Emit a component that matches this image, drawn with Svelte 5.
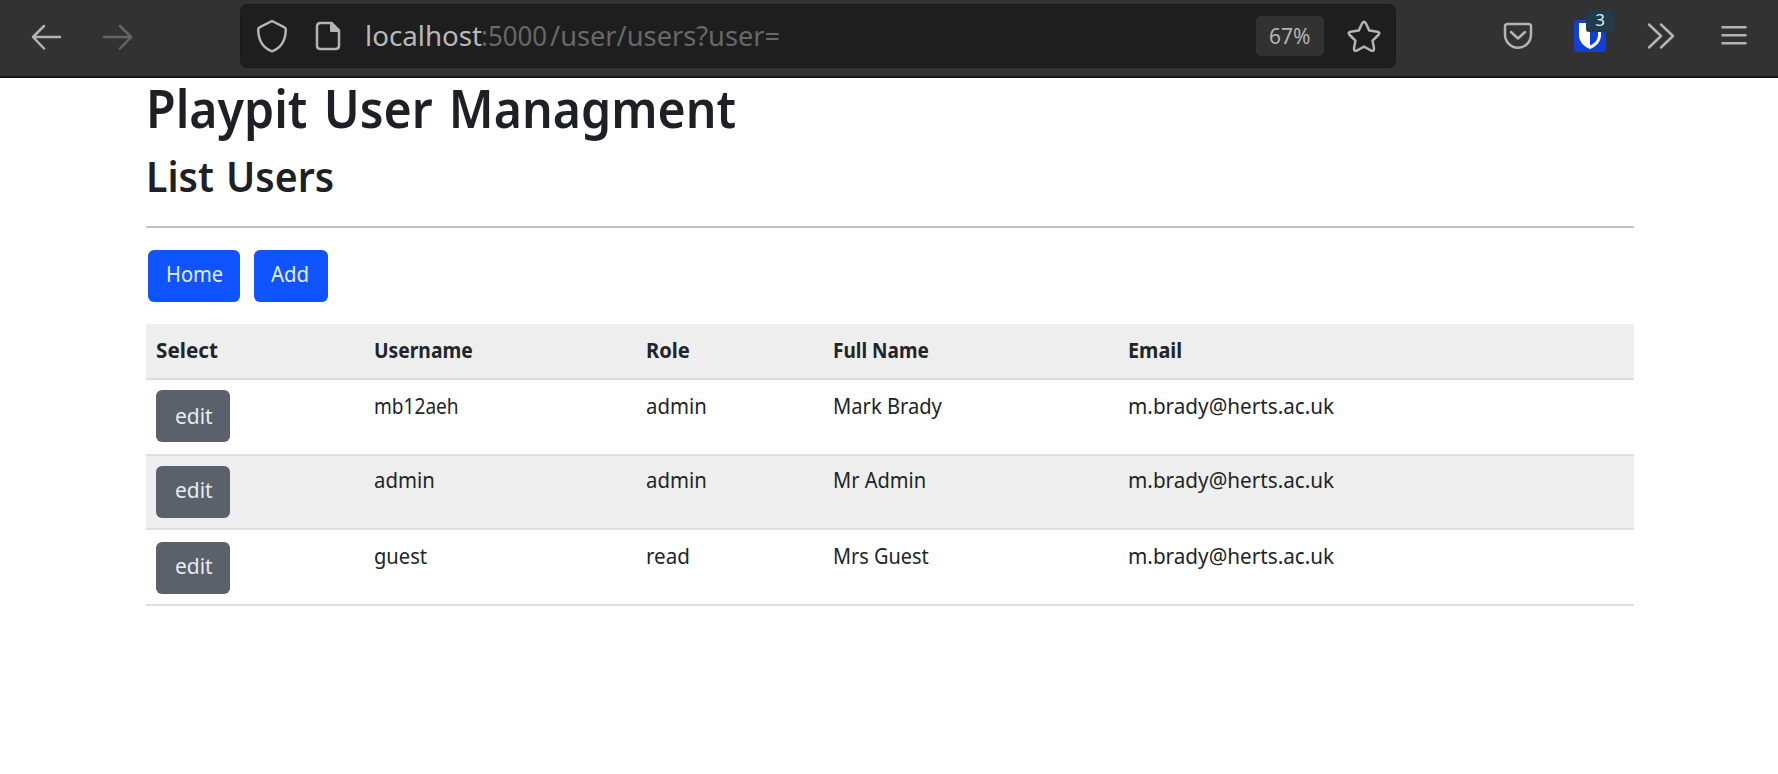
<script>
  const columns = [
    { label: 'Select', width: 62 },
    { label: 'Username', width: 99 },
    { label: 'Role', width: 44 },
    { label: 'Full Name', width: 96 },
    { label: 'Email', width: 54 }
  ];

  const users = [
    { cells: [['mb12aeh', 85], ['admin', 61], ['Mark Brady', 109], ['m.brady@herts.ac.uk', 206]] },
    { cells: [['admin', 61], ['admin', 61], ['Mr Admin', 93], ['m.brady@herts.ac.uk', 206]] },
    { cells: [['guest', 53], ['read', 44], ['Mrs Guest', 96], ['m.brady@herts.ac.uk', 206]] }
  ];

  // Condenses a line of text to the given advance width.
  function fit(node, width) {
    node.style.transform = `scaleX(${width / node.offsetWidth})`;
  }
</script>

<header class="toolbar">
  <nav class="history">
    <svg width="34" height="30" viewBox="29 22 34 30" class="line">
      <path d="M60 37H33M44 26 33 37 44 48.5" />
    </svg>
    <svg width="34" height="30" viewBox="101 22 34 30" class="line dim">
      <path d="M104 37h27M120 26l11.200 11L120 48.500" />
    </svg>
  </nav>

  <div class="address">
    <svg width="34" height="36" viewBox="255 18 34 36" class="line">
      <path d="M272 21 284.500 27.300Q286 28 285.800 30C285.500 40 281 48 272 51.300C263 48 258.500 40 258.200 30Q258 28 259.500 27.300Z" />
    </svg>
    <svg width="28" height="32" viewBox="314 20 28 32" class="line doc">
      <path d="M320.500 23H331.500L339 30.500V45.500Q339 49 335.500 49H320.500Q317 49 317 45.500V26.500Q317 23 320.500 23Z" />
      <path class="solid" d="M330.500 23V31.500H339.500Z" />
    </svg>
    <div class="url">
      <span class="host"><span class="fit" use:fit={117}>localhost</span></span>
      <span class="path"><span class="fit" use:fit={66}>:5000</span></span>
      <span class="path rest"><span class="fit" use:fit={230}>/user/users?user=</span></span>
    </div>
    <div class="zoom"><span class="fit" use:fit={41}>67%</span></div>
    <svg width="36" height="34" viewBox="1346 19 36 34" class="line">
      <path d="M1362.200 23.300Q1364 20 1365.800 23.300L1369.300 30.600 1377.300 31.700Q1380.800 32.500 1378.300 35L1372.600 40.700 1374 48.400Q1374.200 51.800 1371 50.500L1364 46.700 1357 50.500Q1353.800 51.800 1354 48.400L1355.400 40.700 1349.700 35Q1347.200 32.500 1350.700 31.700L1358.700 30.600Z" />
    </svg>
  </div>

  <div class="tools">
    <svg width="30" height="28" viewBox="1503 23 30 28" class="line">
      <path d="M1507.500 25H1528.500Q1531 25 1531 27.500V35.500A13 13.300 0 0 1 1505 35.500V27.500Q1505 25 1507.500 25ZM1511 33l7 6.500 7-6.500" />
    </svg>
    <div class="vault">
      <svg width="32" height="32" viewBox="0 0 32 32">
        <rect width="32" height="32" rx="4" fill="#123fd8" />
        <path d="M5 3H27V15C27 22 22 26.500 16 29C10 26.500 5 22 5 15Z" fill="#fff" />
        <path d="M16 6.500H24V15C24 20 20.500 23.500 16 25.600Z" fill="#123fd8" />
      </svg>
      <span class="badge">3</span>
    </div>
    <svg width="28" height="28" viewBox="1647 22 28 28" class="line">
      <path d="M1649 24.500 1661 36 1649 47.500M1661 24.500 1673 36 1661 47.500" />
    </svg>
    <svg width="26" height="24" viewBox="1721 24 26 24" class="line">
      <path d="M1722.500 27.200h23M1722.500 35.200h23M1722.500 43.200h23" />
    </svg>
  </div>
</header>

<main>
  <h1><span class="fit" use:fit={590}>Playpit User Managment</span></h1>
  <h2><span class="fit" use:fit={188}>List Users</span></h2>
  <hr />
  <div class="actions">
    <button class="btn primary home"><span class="fit" use:fit={57}>Home</span></button>
    <button class="btn primary add"><span class="fit" use:fit={38}>Add</span></button>
  </div>

  <div class="table" role="table">
    <div class="row head" role="row">
      {#each columns as column}
        <div class="cell" role="columnheader"><span class="fit" use:fit={column.width}>{column.label}</span></div>
      {/each}
    </div>
    {#each users as user}
      <div class="row user" role="row">
        <div class="cell pick" role="cell">
          <button class="btn edit"><span class="fit" use:fit={38}>edit</span></button>
        </div>
        {#each user.cells as [text, width]}
          <div class="cell" role="cell"><span class="fit" use:fit={width}>{text}</span></div>
        {/each}
      </div>
    {/each}
  </div>
</main>

<style>
  :global(body) {
    margin: 0;
    background: #fff;
    color: #212529;
    font-family: 'Noto Sans', 'Open Sans', sans-serif;
    overflow: hidden;
  }

  svg {
    display: block;
    flex: none;
  }

  .fit {
    display: inline-block;
    white-space: nowrap;
    transform-origin: left;
  }

  .toolbar {
    box-sizing: border-box;
    height: 78px;
    display: flex;
    align-items: flex-start;
    background: #323232;
    border-bottom: 2px solid #171717;
  }

  .line {
    fill: none;
    stroke: #b4b4b4;
    stroke-width: 2.5;
    stroke-linecap: round;
    stroke-linejoin: round;
  }

  .dim {
    stroke: #646464;
  }

  .solid {
    fill: #b4b4b4;
    stroke-width: 1;
  }

  .history {
    width: 211px;
    padding: 22px 0 0 29px;
    display: flex;
    gap: 38px;
  }

  .address {
    box-sizing: border-box;
    width: 1156px;
    height: 64px;
    margin-top: 4px;
    padding: 0 13px 0 14px;
    display: flex;
    align-items: center;
    background: #1e1e1e;
    border: 1px solid #191919;
    border-radius: 7px;
  }

  .doc {
    margin-left: 25px;
  }

  .url {
    display: flex;
    flex: 1;
    margin-left: 23px;
    font-size: 27px;
    line-height: 40px;
  }

  .host {
    width: 116px;
    color: #b8b8b8;
  }

  .path {
    width: 69px;
    color: #686868;
  }

  .rest {
    width: 230px;
  }

  .zoom {
    box-sizing: border-box;
    width: 68px;
    height: 40px;
    margin-right: 22px;
    padding-left: 13px;
    border-radius: 5px;
    background: #323232;
    color: #b4b4b4;
    font-size: 21px;
    line-height: 41px;
  }

  .tools {
    display: flex;
    align-items: center;
    height: 72px;
    margin-left: 107px;
  }

  .vault {
    position: relative;
    margin: 0 41px;
  }

  .badge {
    position: absolute;
    left: 12px;
    top: -10px;
    width: 28px;
    height: 22px;
    border-radius: 3px;
    background: #203b4c;
    color: #e4eaed;
    font-size: 17px;
    line-height: 19px;
    text-align: center;
  }

  .tools > .line:last-child {
    margin-left: 46px;
  }

  main {
    width: 1488px;
    padding-left: 146px;
  }

  h1,
  h2 {
    box-sizing: border-box;
    margin: 0;
    padding-top: 1px;
    font-weight: 650;
    color: #1d2024;
  }

  h1 {
    height: 67px;
    font-size: 53px;
    line-height: 58px;
    word-spacing: 4px;
  }

  h2 {
    height: 81px;
    font-size: 42px;
    line-height: 60px;
    word-spacing: 2px;
  }

  hr {
    height: 2px;
    margin: 0 0 22px;
    border: 0;
    background: #bfc3c5;
  }

  .actions {
    display: flex;
    gap: 14px;
    margin: 0 0 22px 2px;
  }

  .btn {
    box-sizing: border-box;
    display: block;
    height: 52px;
    margin: 0;
    padding: 0 0 4px 18px;
    border: 0;
    border-radius: 6px;
    font: 21.5px/48px 'Noto Sans', 'Open Sans', sans-serif;
    text-align: left;
  }

  .primary {
    background: #0f54ff;
    color: #e4edff;
  }

  .home {
    width: 92px;
  }

  .add {
    width: 74px;
    padding-left: 17px;
  }

  .edit {
    width: 74px;
    padding: 0 0 2px 19px;
    background: #5a616a;
    color: #e8eaec;
  }

  .user:nth-child(2) .edit {
    padding-bottom: 0;
  }

  .user:nth-child(n + 3) .edit {
    padding-bottom: 4px;
  }

  .row {
    box-sizing: border-box;
    height: 76px;
    display: grid;
    grid-template-columns: 217px 272px 187px 295px 1fr;
    border-bottom: 2px solid #d9dee3;
  }

  .cell {
    padding: 9px 0 0 11px;
    font-size: 22px;
    font-weight: 450;
    line-height: 33px;
  }

  .cell:first-child {
    padding-left: 10px;
  }

  .pick {
    padding-top: 10px;
  }

  .head {
    height: 56px;
    background: #eee;
  }

  .head .cell {
    font-weight: 700;
  }

  .user:nth-child(odd) {
    height: 74px;
    background: #eee;
  }

  .user:nth-child(odd) .cell:not(.pick) {
    padding-top: 7px;
  }

  .user:last-child .pick {
    padding-top: 12px;
  }
</style>
